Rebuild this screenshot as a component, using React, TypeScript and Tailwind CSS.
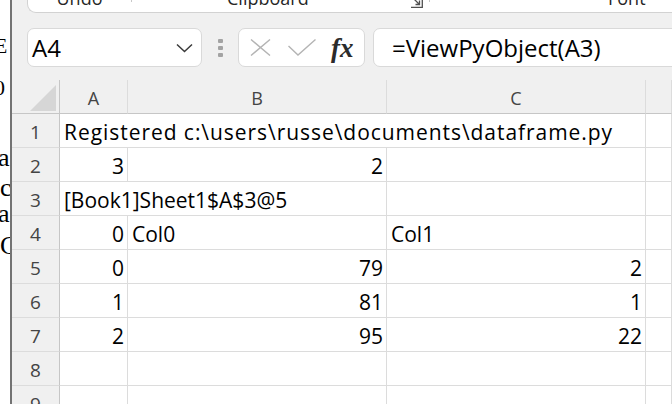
type Cell = { v?: string; span?: 2 | 3; right?: boolean; wide?: boolean };

const rows: Cell[][] = [
  [{ v: "Registered c:\\users\\russe\\documents\\dataframe.py", span: 3, wide: true }, {}],
  [{ v: "3", right: true }, { v: "2", right: true }, {}, {}],
  [{ v: "[Book1]Sheet1$A$3@5", span: 2 }, {}, {}],
  [{ v: "0", right: true }, { v: "Col0" }, { v: "Col1" }, {}],
  [{ v: "0", right: true }, { v: "79", right: true }, { v: "2", right: true }, {}],
  [{ v: "1", right: true }, { v: "81", right: true }, { v: "1", right: true }, {}],
  [{ v: "2", right: true }, { v: "95", right: true }, { v: "22", right: true }, {}],
  [{}, {}, {}, {}],
  [{}, {}, {}, {}],
];

function Separator() {
  return <div className="mb-[5px] w-px self-stretch bg-[#c8c8c8]" />;
}

function BehindWindow() {
  // fragments of another window peeking in at the left edge
  return (
    <div className="flex w-[10px] shrink-0 flex-col overflow-hidden bg-white pt-[36px] text-black [font-family:'Liberation_Serif',serif]">
      <div className="-ml-[5px] h-[20px] shrink-0 text-[20px] leading-[20px]">E</div>
      <div className="h-[21px] shrink-0" />
      <div className="-ml-[6px] h-[22px] shrink-0 text-[22px] leading-[22px]">0</div>
      <div className="h-[46px] shrink-0" />
      <div className="-ml-[2px] h-[26px] shrink-0 text-[26px] leading-[26px]">a</div>
      <div className="h-[4px] shrink-0" />
      <div className="h-[26px] shrink-0 text-[26px] leading-[26px]">c</div>
      <div className="-ml-[2px] h-[26px] shrink-0 text-[26px] leading-[26px]">a</div>
      <div className="h-[6px] shrink-0" />
      <div className="h-[26px] shrink-0 text-[26px] leading-[26px]">C</div>
    </div>
  );
}

function Ribbon() {
  return (
    <div className="-mt-[27px] ml-[15px] flex h-[40px] shrink-0 items-end rounded-bl-[9px] border-b border-l border-[#d2d2d2] bg-white pb-[5px] text-[18px] leading-[18px] text-[#262626]">
      <div className="flex w-[103px] justify-center">Undo</div>
      <Separator />
      <div className="flex w-[297px] items-end pl-[95px]">
        <span>Clipboard</span>
        <svg
          width="13"
          height="12"
          viewBox="0 0 13 12"
          className="mb-[-1px] ml-auto mr-[6px]"
          fill="none"
          stroke="#505050"
          strokeWidth="1.3"
        >
          <path d="M1 11.3 H12.3 V0" />
          <path d="M3 2 L9.5 8.5 M5.5 8.5 H9.5 V4.5" />
        </svg>
      </div>
      <Separator />
      <div className="pl-[178px]">Font</div>
    </div>
  );
}

function FormulaBar() {
  return (
    <div className="mt-[15px] flex h-[39px] shrink-0 items-stretch pl-[15px] text-[24px] leading-[37px] text-black">
      <div className="flex w-[175px] items-center justify-between rounded-[7px] border border-[#d9d9d9] bg-white pl-[4px] pr-[8px]">
        <span>A4</span>
        <svg width="17" height="10" viewBox="0 0 17 10" fill="none" stroke="#3a3a3a" strokeWidth="1.5">
          <path d="M1 1.5 L8.5 8.5 L16 1.5" />
        </svg>
      </div>
      <div className="ml-[16px] flex flex-col justify-center gap-[3px]">
        <div className="h-[4px] w-[5px] rounded-[1px] bg-[#a3a3a3]" />
        <div className="h-[4px] w-[5px] rounded-[1px] bg-[#a3a3a3]" />
        <div className="h-[4px] w-[5px] rounded-[1px] bg-[#a3a3a3]" />
      </div>
      <div className="ml-[15px] flex w-[127px] items-center rounded-[7px] border border-[#d9d9d9] bg-white pl-[11px]">
        <svg width="21" height="17" viewBox="0 0 21 17" fill="none" stroke="#b4b4b4" strokeWidth="1.4">
          <path d="M1 0.5 L20 16.5 M20 0.5 L1 16.5" />
        </svg>
        <svg
          width="28"
          height="17"
          viewBox="0 0 28 17"
          fill="none"
          stroke="#b4b4b4"
          strokeWidth="1.4"
          className="ml-[17px]"
        >
          <path d="M0.5 7 L10 16 L27.5 0.5" />
        </svg>
        <span className="ml-[15px] text-[27px] font-semibold italic leading-[30px] text-[#2b2b2b] [font-family:'Liberation_Serif',serif]">
          fx
        </span>
      </div>
      <div className="-mr-[10px] ml-[8px] flex flex-1 items-center rounded-[7px] border border-[#d9d9d9] bg-white pl-[18px]">
        =ViewPyObject(A3)
      </div>
    </div>
  );
}

function Sheet() {
  const colHead = "flex items-end justify-center border-b border-r border-b-[#c6c6c6] border-r-[#dcdcdc] pb-[4px] text-[18px] leading-[22px] text-[#444]";
  return (
    <div className="mt-[13px] grid shrink-0 grid-cols-[48px_68px_259px_259px_1fr] auto-rows-[34px]">
      <div className="flex items-end justify-end border-b border-r border-[#c6c6c6] pb-[2px] pr-[3px]">
        <svg width="26" height="26" viewBox="0 0 26 26">
          <polygon points="26,0 26,26 0,26" fill="#d6d6d6" />
        </svg>
      </div>
      <div className={colHead}>A</div>
      <div className={colHead}>B</div>
      <div className={colHead}>C</div>
      <div className={colHead} />
      {rows.map((row, i) => (
        <div key={i} className="contents">
          <div className="flex items-end justify-center border-b border-r border-b-[#dcdcdc] border-r-[#c6c6c6] pb-[4px] text-[19px] leading-[22px] text-[#444]">
            {i + 1}
          </div>
          {row.map((c, j) => (
            <div
              key={j}
              className={[
                "flex items-end overflow-hidden whitespace-nowrap border-b border-r border-[#dcdcdc] bg-white pb-[3px] text-[21px] leading-[24px] text-black",
                c.right ? "justify-end pr-[3px]" : "pl-[4px]",
                c.span === 3 ? "col-span-3" : c.span === 2 ? "col-span-2" : "",
                c.wide ? "tracking-[0.95px]" : "",
              ].join(" ")}
            >
              {c.v}
            </div>
          ))}
        </div>
      ))}
    </div>
  );
}

export default function App() {
  return (
    <div className="flex h-[404px] w-[672px] overflow-hidden bg-[#f0f0f0] [font-family:'Open_Sans',sans-serif]">
      <BehindWindow />
      <div className="w-[2px] shrink-0 bg-[#737373]" />
      <div className="flex min-w-0 flex-1 flex-col">
        <Ribbon />
        <FormulaBar />
        <Sheet />
      </div>
    </div>
  );
}
